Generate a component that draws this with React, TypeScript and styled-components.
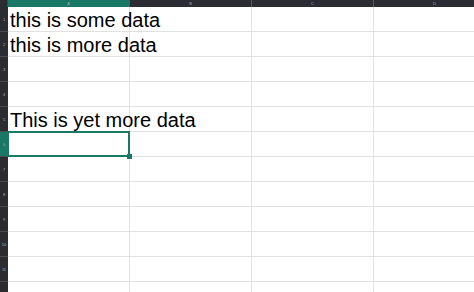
import React from 'react'
import styled, { createGlobalStyle } from 'styled-components'

const GlobalStyle = createGlobalStyle`
  body {
    margin: 0;
    background: #fff;
    overflow: hidden;
    font-family: "Liberation Sans", Arial, sans-serif;
  }
`

const Sheet = styled.div`
  display: grid;
  grid-template-columns: 8px repeat(4, 122px);
  grid-template-rows: 7px repeat(12, 25px);
  width: 474px;
  height: 292px;
  overflow: hidden;
`

const Corner = styled.div`
  background: #2a2c32;
  border-right: 1px solid #45474d;
`

const ColHeader = styled.div<{ $active?: boolean }>`
  background: ${({ $active }) => ($active ? '#1a7866' : '#2a2c32')};
  border-right: 1px solid #55575d;
  color: #a9abb0;
  font-size: 4px;
  line-height: 7px;
  text-align: center;
`

const RowHeader = styled.div<{ $active?: boolean }>`
  background: ${({ $active }) => ($active ? '#1a7866' : '#2a2c32')};
  border-bottom: 1px solid #4a4c52;
  color: #a9abb0;
  font-size: 4px;
  display: flex;
  align-items: center;
  justify-content: center;
`

const Cell = styled.div<{ $selected?: boolean }>`
  position: relative;
  border-right: 1px solid #e1e1e1;
  border-bottom: 1px solid #e1e1e1;
  font-size: 20px;
  color: #000;
  padding-left: 2px;
  line-height: 27px;
  white-space: nowrap;
  ${({ $selected }) =>
    $selected &&
    `
    z-index: 1;
    &::after {
      content: '';
      position: absolute;
      top: -1px;
      left: -1px;
      right: -1px;
      bottom: -1px;
      border: 2px solid #1a7866;
    }
  `}
`

const Handle = styled.span`
  position: absolute;
  right: -3px;
  bottom: -3px;
  width: 5px;
  height: 5px;
  background: #1a7866;
  z-index: 2;
`

const columns = ['A', 'B', 'C', 'D']
const data: Record<number, string> = {
  1: 'this is some data',
  2: 'this is more data',
  5: 'This is yet more data',
}

export default function App() {
  const rows = Array.from({ length: 12 }, (_, i) => i + 1)
  return (
    <>
      <GlobalStyle />
      <Sheet>
        <Corner />
        {columns.map((c, i) => (
          <ColHeader key={c} $active={i === 0}>
            {c}
          </ColHeader>
        ))}
        {rows.map((r) => (
          <React.Fragment key={r}>
            <RowHeader $active={r === 6}>{r < 12 ? r : ''}</RowHeader>
            {columns.map((c, i) => {
              const selected = r === 6 && i === 0
              return (
                <Cell key={c} $selected={selected}>
                  {i === 0 ? data[r] : null}
                  {selected && <Handle />}
                </Cell>
              )
            })}
          </React.Fragment>
        ))}
      </Sheet>
    </>
  )
}
